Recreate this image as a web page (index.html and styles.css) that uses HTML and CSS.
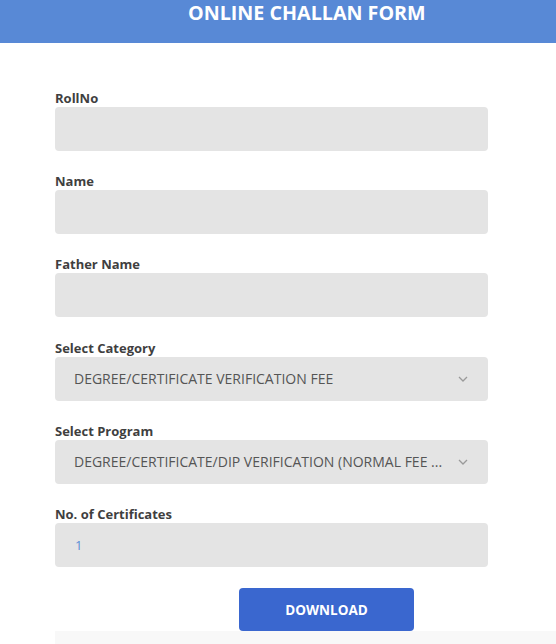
FILE: index.html
```html
<!DOCTYPE html>
<html>
<head>
<meta charset="utf-8">
<link rel="stylesheet" href="styles.css">
</head>
<body>
<header class="topbar">
  <h1 class="title">ONLINE CHALLAN FORM</h1>
</header>
<main class="form">
  <div class="field">
    <label class="label">RollNo</label>
    <div class="input"></div>
  </div>
  <div class="field">
    <label class="label">Name</label>
    <div class="input"></div>
  </div>
  <div class="field">
    <label class="label">Father Name</label>
    <div class="input"></div>
  </div>
  <div class="field">
    <label class="label">Select Category</label>
    <div class="input select">
      <span class="value">DEGREE/CERTIFICATE VERIFICATION FEE</span>
      <svg class="chev" width="10" height="6" viewBox="0 0 10 6"><path d="M1 1 L5 5 L9 1" fill="none" stroke="#9a9a9a" stroke-width="1.3"/></svg>
    </div>
  </div>
  <div class="field">
    <label class="label">Select Program</label>
    <div class="input select">
      <span class="value">DEGREE/CERTIFICATE/DIP VERIFICATION (NORMAL FEE ...</span>
      <svg class="chev" width="10" height="6" viewBox="0 0 10 6"><path d="M1 1 L5 5 L9 1" fill="none" stroke="#9a9a9a" stroke-width="1.3"/></svg>
    </div>
  </div>
  <div class="field">
    <label class="label">No. of Certificates</label>
    <div class="input"><span class="num">1</span></div>
  </div>
  <div class="actions">
    <button class="btn">DOWNLOAD</button>
  </div>
</main>
<div class="footer-strip"></div>
</body>
</html>
```
FILE: styles.css
```css
html, body {
  margin: 0;
  padding: 0;
  background: #ffffff;
  font-family: "Open Sans", "Noto Sans", sans-serif;
}
.topbar {
  height: 43px;
  background: #5889d6;
  box-sizing: border-box;
  padding-left: 188px;
}
.title {
  margin: 0;
  color: #ffffff;
  font-size: 19.7px;
  font-weight: 700;
  line-height: 26px;
}
.form {
  width: 433px;
  margin-left: 55px;
  padding-top: 46px;
}
.field {
  display: flex;
  flex-direction: column;
  margin-bottom: 21.2px;
}
.label {
  font-size: 13px;
  font-weight: 700;
  color: #3f3f3f;
  line-height: 18px;
}
.input {
  height: 44px;
  background: #e4e4e4;
  border-radius: 4px;
  display: flex;
  align-items: center;
  padding: 0 20px 0 19px;
  box-sizing: border-box;
}
.select {
  justify-content: space-between;
}
.value {
  font-size: 14px;
  color: #555555;
}
.num {
  font-size: 13px;
  color: #5b8fd6;
  padding-left: 1px;
}
.actions {
  display: flex;
  padding-left: 184px;
  margin-top: 1px;
}
.btn {
  width: 175px;
  height: 43px;
  border: none;
  border-radius: 4px;
  background: #3a67cf;
  color: #ffffff;
  font-family: "Open Sans", "Noto Sans", sans-serif;
  font-weight: 700;
  font-size: 13.5px;
  padding: 0;
}
.footer-strip {
  margin-left: 55px;
  height: 30px;
  background: #f8f8f8;
}
```
